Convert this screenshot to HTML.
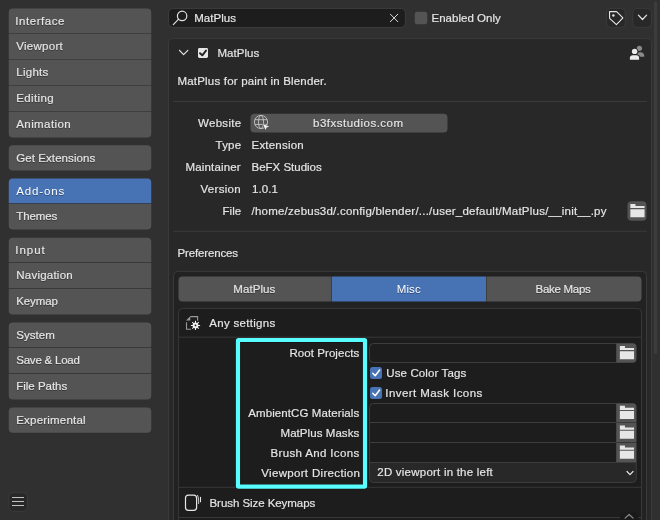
<!DOCTYPE html>
<html lang="en"><head><meta charset="utf-8"><title>Blender Preferences</title>
<style>
html,body{margin:0;padding:0;background:#303030;width:660px;height:520px;overflow:hidden}
svg{display:block;font-family:"Liberation Sans",sans-serif;font-size:11.5px}
text{stroke-width:.18px}

</style></head><body>
<svg width="660" height="520" viewBox="0 0 660 520">
<rect width="660" height="520" fill="#303030"/>
<path d="M12.75 8.5H147.25A4 4 0 0 1 151.25 12.5V33.15H8.75V12.5A4 4 0 0 1 12.75 8.5Z" fill="#545454"/>
<path d="M8.75 33.85H151.25V59.15H8.75V33.85Z" fill="#545454"/>
<path d="M8.75 59.85H151.25V85.15H8.75V59.85Z" fill="#545454"/>
<path d="M8.75 85.85H151.25V111.15H8.75V85.85Z" fill="#545454"/>
<path d="M8.75 111.85H151.25V133.4A4 4 0 0 1 147.25 137.4H12.75A4 4 0 0 1 8.75 133.4V111.85Z" fill="#545454"/>
<path d="M12.75 145.2H147.25A4 4 0 0 1 151.25 149.2V166.6A4 4 0 0 1 147.25 170.6H12.75A4 4 0 0 1 8.75 166.6V149.2A4 4 0 0 1 12.75 145.2Z" fill="#545454"/>
<path d="M12.75 178.6H147.25A4 4 0 0 1 151.25 182.6V203.25H8.75V182.6A4 4 0 0 1 12.75 178.6Z" fill="#4772b3"/>
<path d="M8.75 203.95H151.25V225.4A4 4 0 0 1 147.25 229.4H12.75A4 4 0 0 1 8.75 225.4V203.95Z" fill="#545454"/>
<path d="M12.75 237.7H147.25A4 4 0 0 1 151.25 241.7V262.35H8.75V241.7A4 4 0 0 1 12.75 237.7Z" fill="#545454"/>
<path d="M8.75 263.05H151.25V288.35H8.75V263.05Z" fill="#545454"/>
<path d="M8.75 289.05H151.25V310.4A4 4 0 0 1 147.25 314.4H12.75A4 4 0 0 1 8.75 310.4V289.05Z" fill="#545454"/>
<path d="M12.75 322.6H147.25A4 4 0 0 1 151.25 326.6V347.25H8.75V326.6A4 4 0 0 1 12.75 322.6Z" fill="#545454"/>
<path d="M8.75 347.95H151.25V373.25H8.75V347.95Z" fill="#545454"/>
<path d="M8.75 373.95H151.25V395.4A4 4 0 0 1 147.25 399.4H12.75A4 4 0 0 1 8.75 395.4V373.95Z" fill="#545454"/>
<path d="M12.75 407.6H147.25A4 4 0 0 1 151.25 411.6V428.8A4 4 0 0 1 147.25 432.8H12.75A4 4 0 0 1 8.75 428.8V411.6A4 4 0 0 1 12.75 407.6Z" fill="#545454"/>
<rect x="8.8" y="492.7" width="18.6" height="18.6" fill="#282828" rx="4" stroke="#3a3a3a" stroke-width="1"/>
<line x1="12" y1="497.5" x2="24" y2="497.5" stroke="#c0c0c0" stroke-width="1"/>
<line x1="12" y1="501.5" x2="24" y2="501.5" stroke="#c0c0c0" stroke-width="1"/>
<line x1="12" y1="505.5" x2="24" y2="505.5" stroke="#c0c0c0" stroke-width="1"/>
<rect x="168.6" y="8.4" width="236.8" height="19" fill="#1d1d1d" rx="4" stroke="#3d3d3d" stroke-width="1"/>
<g fill="none" stroke="#e0e0e0" stroke-width="1.2" stroke-linecap="round"><circle cx="182.1" cy="15.9" r="4.7"/><path d="M178.6 19.2L173.3 24.6"/></g>
<path d="M390.4 14.2L397.8 21.7M397.8 14.2L390.4 21.7" stroke="#dcdcdc" stroke-width="1" fill="none" stroke-linecap="round"/>
<rect x="414.75" y="11.75" width="12.5" height="12.5" fill="#545454" rx="2.5"/>
<rect x="606.5" y="8.4" width="18.8" height="19" fill="#282828" rx="4" stroke="#3a3a3a" stroke-width="1"/>
<rect x="632.7" y="8.4" width="18.8" height="19" fill="#282828" rx="4" stroke="#3a3a3a" stroke-width="1"/>
<g fill="none" stroke="#e6e6e6" stroke-width="1.1" stroke-linejoin="round"><path d="M609.5 11.6L616.6 11.6L622.9 17.8L616.4 24.6L609.6 18.3Z"/></g><circle cx="613.4" cy="15.5" r="1.2" fill="#e6e6e6"/>
<path d="M638.4 15.2L642.5 19.5L646.6 15.2" stroke="#e6e6e6" stroke-width="1.2" fill="none" stroke-linecap="round" stroke-linejoin="round"/>
<rect x="654" y="1.5" width="3.2" height="352.5" fill="#3c3c3c" rx="1.6"/>
<path d="M172.5 38.6H647.5A4 4 0 0 1 651.5 42.6V530H168.5V42.6A4 4 0 0 1 172.5 38.6Z" fill="#282828" stroke="#3a3a3a" stroke-width="1"/>
<path d="M179.5 50.3L183.6 54.6L187.8 50.3" stroke="#e6e6e6" stroke-width="1.2" fill="none" stroke-linecap="round" stroke-linejoin="round"/>
<rect x="198" y="48" width="10" height="10" fill="#e6e6e6" rx="1.4"/>
<path d="M200 53.2L202.3 55.3L206 50.6" stroke="#222222" stroke-width="1.9" fill="none" stroke-linecap="round" stroke-linejoin="round"/>
<g><circle cx="639.4" cy="48.3" r="2.6" fill="#8a8a8a"/><path d="M637.2 56.8V54.6C637.2 53 638 52.3 639.4 52.3H640.6C642.8 52.3 644.2 53.6 644.2 55.6V56.8Z" fill="#8a8a8a"/><circle cx="634.6" cy="51.4" r="3.5" fill="#282828"/><path d="M629 60.6V57.6C629 55.4 630.6 54.4 632.4 54.4H636.8C638.6 54.4 640 55.4 640 57.6V60.6Z" fill="#282828"/><circle cx="634.6" cy="51.4" r="2.7" fill="#ececec"/><path d="M629.9 59.8V57.8C629.9 56.2 631 55.3 632.6 55.3H636.5C638 55.3 639.1 56.2 639.1 57.8V59.8Z" fill="#ececec"/></g>
<line x1="173" y1="101.5" x2="647" y2="101.5" stroke="#3a3a3a" stroke-width="1"/>
<rect x="250.5" y="113.75" width="197" height="18.75" fill="#545454" rx="4"/>
<g fill="none" stroke="#c6c6c6" stroke-width="0.9"><circle cx="261" cy="122" r="6.6"/><ellipse cx="261" cy="122" rx="2.5" ry="6.6"/><path d="M255 119.7H267M255 124.4H267"/></g><path d="M262.9 124L269.2 126.6L266.6 127.6L265.5 130.1Z" fill="#f0f0f0" stroke="#545454" stroke-width="0.9" stroke-linejoin="round" paint-order="stroke"/>
<path d="M631.5 201.25H642.5A4 4 0 0 1 646.5 205.25V216.75A4 4 0 0 1 642.5 220.75H631.5A4 4 0 0 1 627.5 216.75V205.25A4 4 0 0 1 631.5 201.25Z" fill="#545454"/>
<path d="M630.35 204h5.1v1.9h9.1v2.2h-14.2zM630.35 209.2h14.2v8h-14.2z" fill="#e6e6e6"/>
<line x1="173" y1="231.25" x2="647" y2="231.25" stroke="#3a3a3a" stroke-width="1"/>
<path d="M177.5 271.4H642.5A4 4 0 0 1 646.5 275.4V530H173.5V275.4A4 4 0 0 1 177.5 271.4Z" fill="#222222" stroke="#3a3a3a" stroke-width="1"/>
<path d="M182.5 276.5H331.6V301.5H182.5A4 4 0 0 1 178.5 297.5V280.5A4 4 0 0 1 182.5 276.5Z" fill="#545454"/>
<path d="M332 276.5H486V301.5H332V276.5Z" fill="#4772b3"/>
<path d="M486.4 276.5H637.5A4 4 0 0 1 641.5 280.5V297.5A4 4 0 0 1 637.5 301.5H486.4V276.5Z" fill="#545454"/>
<path d="M182.6 308.4H637.5A4 4 0 0 1 641.5 312.4V530H178.6V312.4A4 4 0 0 1 182.6 308.4Z" fill="#1d1d1d" stroke="#383838" stroke-width="1"/>
<line x1="178.6" y1="337.2" x2="641.5" y2="337.2" stroke="#383838" stroke-width="1"/>
<line x1="178.6" y1="487.3" x2="641.5" y2="487.3" stroke="#383838" stroke-width="1"/>
<line x1="178.6" y1="517.5" x2="641.5" y2="517.5" stroke="#383838" stroke-width="1"/>
<g fill="none" stroke="#999999" stroke-width="1.1"><path d="M190.2 316.6H197.6V320.8M186.5 322.2V329.3H191"/><path d="M186 320.6L190.3 316.2V320.6Z" fill="#999999" stroke="none"/></g><g stroke="#f0f0f0" stroke-width="1.05" stroke-linecap="butt"><path d="M195.5 320.8V330M190.9 325.4H200.1M192.25 322.15L198.75 328.65M198.75 322.15L192.25 328.65"/></g><circle cx="195.5" cy="325.4" r="2.9" fill="#f0f0f0"/><circle cx="195.5" cy="325.4" r="0.9" fill="#1d1d1d"/>
<rect x="238.3" y="340.3" width="127.05" height="146.55" fill="none" rx="0.8" stroke="#140a0a" stroke-width="4.6"/>
<rect x="238" y="340" width="127.05" height="146.55" fill="none" rx="0.6" stroke="#57fdff" stroke-width="4.2"/>
<path d="M373.5 343.5H616.5V362.5H373.5A4 4 0 0 1 369.5 358.5V347.5A4 4 0 0 1 373.5 343.5Z" fill="#1d1d1d" stroke="#3d3d3d" stroke-width="1"/>
<path d="M616.5 343.25H632.5A4 4 0 0 1 636.5 347.25V358.75A4 4 0 0 1 632.5 362.75H616.5V343.25Z" fill="#545454"/>
<path d="M619.85 346h5.1v1.9h9.1v2.2h-14.2zM619.85 351.2h14.2v8h-14.2z" fill="#e6e6e6"/>
<path d="M373.5 403.5H616.5V422.5H369.5V407.5A4 4 0 0 1 373.5 403.5Z" fill="#1d1d1d" stroke="#3d3d3d" stroke-width="1"/>
<path d="M616.5 403.25H632.5A4 4 0 0 1 636.5 407.25V422.4H616.5V403.25Z" fill="#545454"/>
<path d="M619.85 405.825h5.1v1.9h9.1v2.2h-14.2zM619.85 411.025h14.2v8h-14.2z" fill="#e6e6e6"/>
<path d="M369.5 422.5H616.5V442.5H369.5V422.5Z" fill="#1d1d1d" stroke="#3d3d3d" stroke-width="1"/>
<path d="M616.5 422.9H636.5V442.3H616.5V422.9Z" fill="#545454"/>
<path d="M619.85 425.6h5.1v1.9h9.1v2.2h-14.2zM619.85 430.8h14.2v8h-14.2z" fill="#e6e6e6"/>
<path d="M369.5 442.5H616.5V462.5H369.5V442.5Z" fill="#1d1d1d" stroke="#3d3d3d" stroke-width="1"/>
<path d="M616.5 442.8H636.5V462.3H616.5V442.8Z" fill="#545454"/>
<path d="M619.85 445.55h5.1v1.9h9.1v2.2h-14.2zM619.85 450.75h14.2v8h-14.2z" fill="#e6e6e6"/>
<path d="M369.5 462.5H636.25V478.5A4 4 0 0 1 632.25 482.5H373.5A4 4 0 0 1 369.5 478.5V462.5Z" fill="#282828" stroke="#3d3d3d" stroke-width="1"/>
<path d="M627 471.5L630 474.6L633 471.5" stroke="#e6e6e6" stroke-width="1.2" fill="none" stroke-linecap="round" stroke-linejoin="round"/>
<rect x="370" y="367" width="12" height="12" fill="#4772b3" rx="2.5"/>
<path d="M372.8 373.2L375.2 375.7L379.6 370" stroke="#ffffff" stroke-width="1.5" fill="none" stroke-linecap="round" stroke-linejoin="round"/>
<rect x="370" y="387" width="12" height="12" fill="#4772b3" rx="2.5"/>
<path d="M372.8 393.2L375.2 395.7L379.6 390" stroke="#ffffff" stroke-width="1.5" fill="none" stroke-linecap="round" stroke-linejoin="round"/>
<g fill="none" stroke="#e6e6e6" stroke-width="1.2" stroke-linecap="round"><rect x="185.5" y="495.1" width="11.1" height="15.3" rx="3"/><path d="M197.6 495.4C198.5 497.5 198.8 500.5 198.6 503.5" stroke-width="0.9"/><path d="M200.5 497.4V501.7" stroke-width="1.1"/></g>
<path d="M624 512.2H634.2A4 4 0 0 1 638.2 516.2V530H620V516.2A4 4 0 0 1 624 512.2Z" fill="#1a1a1a"/>
<path d="M625.1 518.1L629.1 514.5L633.1 518.1" stroke="#8c8c8c" stroke-width="1.2" fill="none" stroke-linecap="round" stroke-linejoin="round"/>
<g class="labels" style="will-change:opacity">
<g class="btn-labels" style="filter:drop-shadow(0 1px 0.4px rgba(0,0,0,.32))">
<text x="15.25" y="25" fill="#e6e6e6" stroke="#e6e6e6" letter-spacing="0.550">Interface</text>
<text x="16.25" y="50" fill="#e6e6e6" stroke="#e6e6e6" letter-spacing="0.273">Viewport</text>
<text x="16.25" y="76" fill="#e6e6e6" stroke="#e6e6e6" letter-spacing="0.263">Lights</text>
<text x="16.25" y="102" fill="#e6e6e6" stroke="#e6e6e6" letter-spacing="0.372">Editing</text>
<text x="16.25" y="128" fill="#e6e6e6" stroke="#e6e6e6" letter-spacing="0.407">Animation</text>
<text x="16.25" y="162" fill="#e6e6e6" stroke="#e6e6e6" letter-spacing="0.078">Get Extensions</text>
<text x="16.25" y="195" fill="#ffffff" letter-spacing="0.861">Add-ons</text>
<text x="16.25" y="220" fill="#e6e6e6" stroke="#e6e6e6" letter-spacing="-0.108">Themes</text>
<text x="15.25" y="254" fill="#e6e6e6" stroke="#e6e6e6" letter-spacing="0.967">Input</text>
<text x="16.25" y="279" fill="#e6e6e6" stroke="#e6e6e6" letter-spacing="0.229">Navigation</text>
<text x="16.25" y="305" fill="#e6e6e6" stroke="#e6e6e6" letter-spacing="-0.108">Keymap</text>
<text x="16.25" y="339" fill="#e6e6e6" stroke="#e6e6e6" letter-spacing="0.048">System</text>
<text x="16.25" y="364" fill="#e6e6e6" stroke="#e6e6e6" letter-spacing="-0.221">Save &amp; Load</text>
<text x="16.25" y="390" fill="#e6e6e6" stroke="#e6e6e6" letter-spacing="-0.015">File Paths</text>
<text x="16.25" y="424" fill="#e6e6e6" stroke="#e6e6e6" letter-spacing="0.199">Experimental</text>
<text x="313" y="127" fill="#e6e6e6" stroke="#e6e6e6" letter-spacing="0.499">b3fxstudios.com</text>
<text x="233.25" y="293" fill="#e6e6e6" stroke="#e6e6e6" letter-spacing="0.076">MatPlus</text>
<text x="396.7" y="293" fill="#ffffff" letter-spacing="0.138">Misc</text>
<text x="535.5" y="293" fill="#e6e6e6" stroke="#e6e6e6" letter-spacing="-0.285">Bake Maps</text>
</g>
<text x="194.25" y="22" fill="#e6e6e6" stroke="#e6e6e6" letter-spacing="0.035">MatPlus</text>
<text x="431.5" y="22" fill="#e6e6e6" stroke="#e6e6e6" letter-spacing="0.019">Enabled Only</text>
<text x="217.5" y="57" fill="#e6e6e6" stroke="#e6e6e6" letter-spacing="0.035">MatPlus</text>
<text x="177.5" y="85" fill="#e6e6e6" stroke="#e6e6e6" letter-spacing="0.192">MatPlus for paint in Blender.</text>
<text x="198" y="127" fill="#e6e6e6" stroke="#e6e6e6" letter-spacing="0.302">Website</text>
<text x="215.5" y="149" fill="#e6e6e6" stroke="#e6e6e6" letter-spacing="0.238">Type</text>
<text x="251.5" y="149" fill="#e6e6e6" stroke="#e6e6e6" letter-spacing="0.205">Extension</text>
<text x="185.5" y="171" fill="#e6e6e6" stroke="#e6e6e6" letter-spacing="0.154">Maintainer</text>
<text x="251.5" y="171" fill="#e6e6e6" stroke="#e6e6e6" letter-spacing="-0.006">BeFX Studios</text>
<text x="200.5" y="193" fill="#e6e6e6" stroke="#e6e6e6" letter-spacing="0.298">Version</text>
<text x="252" y="193" fill="#e6e6e6" stroke="#e6e6e6" letter-spacing="0.080">1.0.1</text>
<text x="222.5" y="215" fill="#e6e6e6" stroke="#e6e6e6" letter-spacing="0.038">File</text>
<text x="251.5" y="215" fill="#e6e6e6" stroke="#e6e6e6" letter-spacing="0.229">/home/zebus3d/.config/blender/.../user_default/MatPlus/__init__.py</text>
<text x="177.5" y="257" fill="#e6e6e6" stroke="#e6e6e6" letter-spacing="-0.150">Preferences</text>
<text x="209.25" y="327" fill="#e6e6e6" stroke="#e6e6e6" letter-spacing="0.305">Any settigns</text>
<text x="289.5" y="357" fill="#e6e6e6" stroke="#e6e6e6" letter-spacing="0.060">Root Projects</text>
<text x="248.25" y="417" fill="#e6e6e6" stroke="#e6e6e6" letter-spacing="0.095">AmbientCG Materials</text>
<text x="280.5" y="437" fill="#e6e6e6" stroke="#e6e6e6" letter-spacing="0.066">MatPlus Masks</text>
<text x="270.5" y="457" fill="#e6e6e6" stroke="#e6e6e6" letter-spacing="0.354">Brush And Icons</text>
<text x="261.25" y="477" fill="#e6e6e6" stroke="#e6e6e6" letter-spacing="0.326">Viewport Direction</text>
<text x="377.3" y="476" fill="#e6e6e6" stroke="#e6e6e6" letter-spacing="0.223">2D viewport in the left</text>
<text x="386.25" y="377" fill="#e6e6e6" stroke="#e6e6e6" letter-spacing="0.121">Use Color Tags</text>
<text x="385.25" y="397" fill="#e6e6e6" stroke="#e6e6e6" letter-spacing="0.430">Invert Mask Icons</text>
<text x="209.5" y="507" fill="#e6e6e6" stroke="#e6e6e6" letter-spacing="-0.058">Brush Size Keymaps</text>
</g>
</svg>
</body></html>
